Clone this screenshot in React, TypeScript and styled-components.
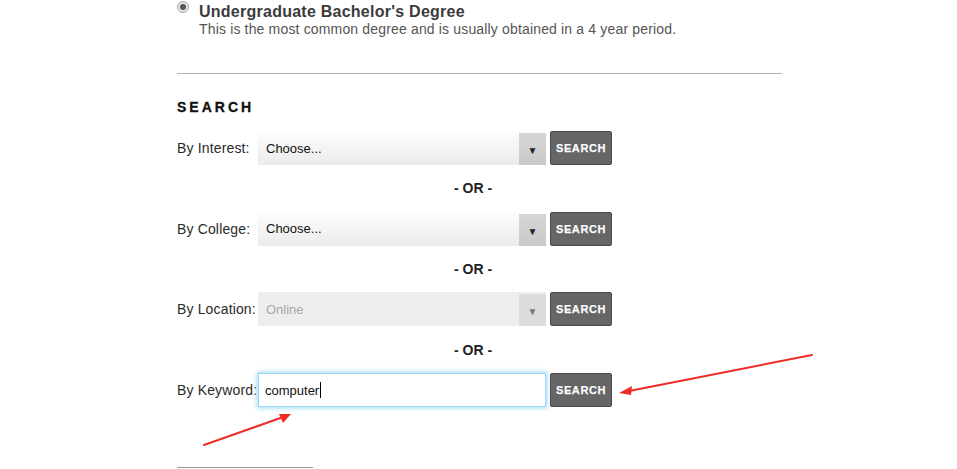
import { FC } from "react";
import styled, { createGlobalStyle } from "styled-components";

const GlobalStyle = createGlobalStyle`
  html, body {
    margin: 0;
    padding: 0;
    background: #fff;
    font-family: "Liberation Sans", Arial, sans-serif;
    color: #333;
  }
`;

const Root = styled.div`
  position: relative;
  width: 957px;
  height: 469px;
  overflow: hidden;
`;
const Content = styled.div`
  width: 605px;
  padding-left: 177px;
`;
const Option = styled.div`
  display: flex;
  align-items: flex-start;
  gap: 10px;
  padding-top: 3px;
`;
const Radio = styled.span`
  width: 10px;
  height: 10px;
  margin-top: -2px;
  border-radius: 50%;
  border: 1px solid #a5a5a5;
  background: radial-gradient(circle, #5a5a5a 0 2.6px, #8a8a8a 3px, #eaeaea 3.6px);
  flex-shrink: 0;
`;
const OptionText = styled.div`
  display: flex;
  flex-direction: column;
`;
const OptionTitle = styled.div`
  font-size: 16px;
  font-weight: 700;
  letter-spacing: 0.25px;
  line-height: 18px;
  color: #3b3b3b;
`;
const OptionDesc = styled.div`
  font-size: 14px;
  letter-spacing: 0.16px;
  line-height: 17px;
  color: #555;
`;
const Rule = styled.div`
  height: 1px;
  background: #b5b5b5;
  margin-top: 35px;
`;
const Heading = styled.h2`
  margin: 25px 0 0;
  font-size: 14px;
  line-height: 16px;
  font-weight: 900;
  letter-spacing: 3px;
  color: #111;
  -webkit-text-stroke: 0.3px #111;
`;
const Form = styled.div`
  display: flex;
  flex-direction: column;
  margin-top: 16px;
`;
const Row = styled.div`
  display: flex;
  align-items: center;
  height: 34px;
`;
const Label = styled.div`
  width: 81px;
  flex-shrink: 0;
  font-size: 14px;
  letter-spacing: 0.15px;
  color: #2b2b2b;
  white-space: nowrap;
`;
const Select = styled.div<{ $disabled?: boolean }>`
  position: relative;
  width: 288px;
  height: 34px;
  display: flex;
  align-items: center;
  box-sizing: border-box;
  padding-left: 8px;
  background: ${(p) =>
    p.$disabled ? "#ededed" : "linear-gradient(#fdfdfd, #ebebeb)"};
  font-size: 13px;
  color: ${(p) => (p.$disabled ? "#a8a8a8" : "#111")};
`;
const ArrowBox = styled.div<{ $disabled?: boolean }>`
  position: absolute;
  right: 0;
  top: 2px;
  bottom: 0;
  width: 27px;
  display: flex;
  align-items: center;
  justify-content: center;
  background: ${(p) =>
    p.$disabled ? "#dcdcdc" : "linear-gradient(#d6d6d6, #c9c9c9)"};
  color: ${(p) => (p.$disabled ? "#777" : "#222")};
  font-size: 10px;
  padding-top: 3px;
  box-sizing: border-box;
`;
const TextInput = styled.div`
  width: 288px;
  height: 34px;
  box-sizing: border-box;
  display: flex;
  align-items: center;
  padding-left: 6px;
  background: #fff;
  border: 1px solid #9fd6f3;
  box-shadow: 0 0 5px 1px #9ad9f8;
  font-size: 13px;
  color: #111;
`;
const Caret = styled.span`
  display: inline-block;
  width: 1px;
  height: 16px;
  background: #000;
  margin-left: 1px;
`;
const Button = styled.button`
  margin-left: 4px;
  width: 62px;
  height: 34px;
  box-sizing: border-box;
  border: 1px solid #4a4a4a;
  border-radius: 2px;
  background: #666;
  color: #fff;
  font-family: "Liberation Sans", Arial, sans-serif;
  font-size: 11px;
  font-weight: 700;
  letter-spacing: 0.6px;
  padding: 0;
  -webkit-text-stroke: 0.25px #fff;
  text-shadow: 0 0 1px rgba(0, 0, 0, 0.4);
`;
const Or = styled.div`
  width: 592px;
  height: 46.7px;
  display: flex;
  align-items: center;
  justify-content: center;
  font-size: 14px;
  font-weight: 700;
  color: #222;
`;
const BottomRule = styled.div`
  width: 136px;
  height: 1px;
  background: #9a9a9a;
  margin-top: 60px;
`;
const Annotations = styled.svg`
  position: absolute;
  left: 0;
  top: 0;
  pointer-events: none;
`;

interface SelectRowProps {
  label: string;
  value: string;
  disabled?: boolean;
}
const SelectRow: FC<SelectRowProps> = ({ label, value, disabled }) => (
  <Row>
    <Label>{label}</Label>
    <Select $disabled={disabled}>
      {value}
      <ArrowBox $disabled={disabled}>▼</ArrowBox>
    </Select>
    <Button>SEARCH</Button>
  </Row>
);

export default function App() {
  return (
    <Root>
      <GlobalStyle />
      <Content>
        <Option>
          <Radio />
          <OptionText>
            <OptionTitle>Undergraduate Bachelor's Degree</OptionTitle>
            <OptionDesc>
              This is the most common degree and is usually obtained in a 4
              year period.
            </OptionDesc>
          </OptionText>
        </Option>
        <Rule />
        <Heading>SEARCH</Heading>
        <Form>
          <SelectRow label="By Interest:" value="Choose..." />
          <Or>- OR -</Or>
          <SelectRow label="By College:" value="Choose..." />
          <Or>- OR -</Or>
          <SelectRow label="By Location:" value="Online" disabled />
          <Or>- OR -</Or>
          <Row>
            <Label>By Keyword:</Label>
            <TextInput>
              computer
              <Caret />
            </TextInput>
            <Button>SEARCH</Button>
          </Row>
        </Form>
        <BottomRule />
      </Content>
      <Annotations width="957" height="469" viewBox="0 0 957 469">
        <g stroke="#ee2b24" strokeWidth="2" fill="none" strokeLinecap="round">
          <line x1="812" y1="355" x2="624" y2="392" />
          <line x1="204" y1="445" x2="286" y2="416" />
        </g>
        <g fill="#ee2b24">
          <polygon points="619,393 632,386 631,395" />
          <polygon points="291,414 279,414 283,423" />
        </g>
      </Annotations>
    </Root>
  );
}
